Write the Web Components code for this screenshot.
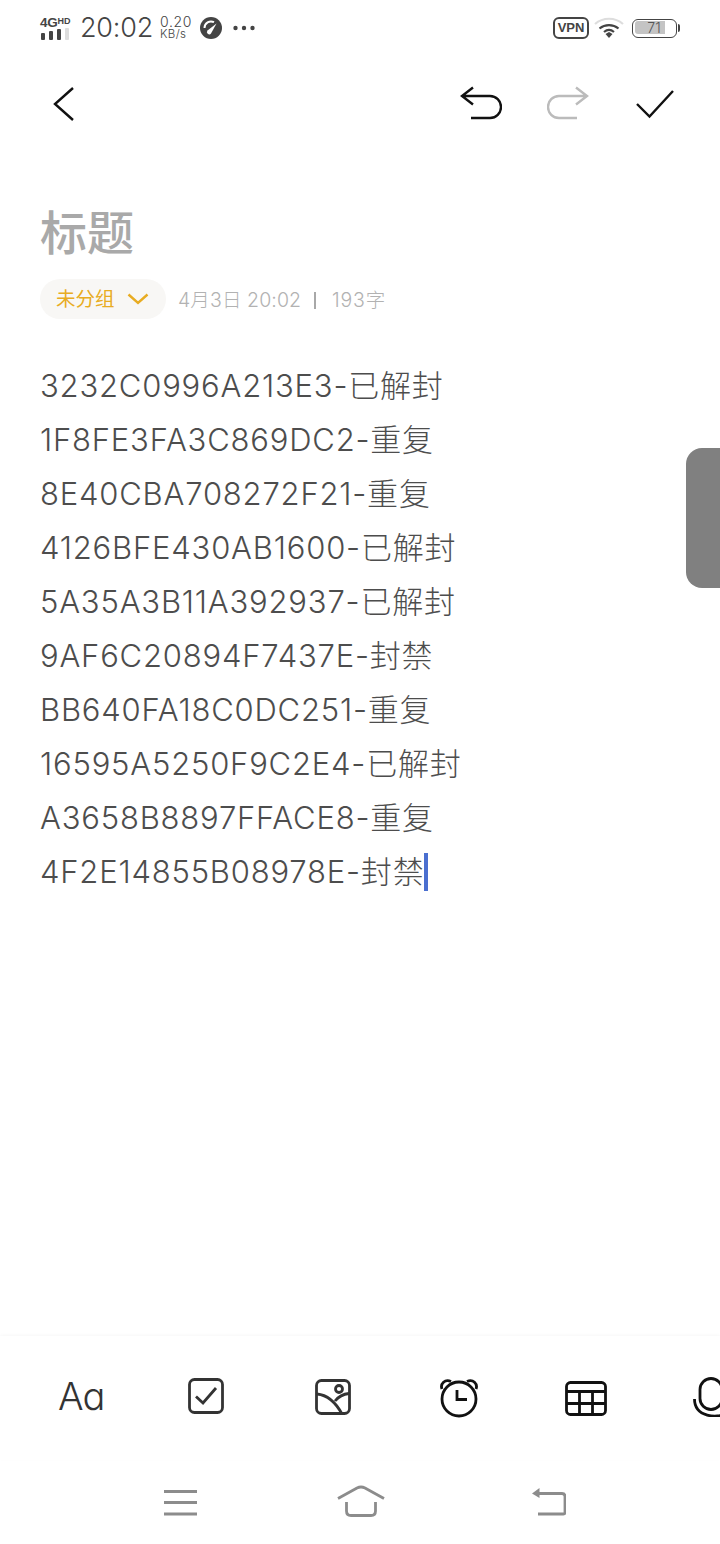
<!DOCTYPE html>
<html lang="zh">
<head>
<meta charset="utf-8">
<title>标题</title>
<style>
html, body { margin: 0; padding: 0; background: #fff; }
body { width: 720px; height: 1544px; overflow: hidden; font-family: Inter, "Noto Sans CJK SC", sans-serif; }
</style>
</head>
<body>
<note-app></note-app>
<script>
const FONT = 'Inter, "Noto Sans CJK SC", sans-serif';

class StatusBar extends HTMLElement {
    constructor() {
        super();
        this.attachShadow({ mode: 'open' });
        this.shadowRoot.innerHTML = `
            <style>
                :host { display: flex; align-items: center; justify-content: space-between; height: 56px; padding: 0 40px; color: #444; font-family: ${FONT}; box-sizing: border-box; }
                .left, .right { display: flex; align-items: center; }
                .net { width: 32px; display: flex; flex-direction: column; margin-top: -1px; }
                .net b { font: bold 13.500px/13px "Liberation Sans", sans-serif; letter-spacing: -0.2px; white-space: nowrap; }
                .net b span { font-size: 9px; vertical-align: 2.500px; letter-spacing: 0; }
                .time { width: 72px; font-size: 27px; line-height: 30px; margin-left: 8px; font-weight: 300; white-space: nowrap; letter-spacing: -.2px; }
                .speed { width: 32px; margin-left: 8px; font-weight: 300; white-space: nowrap; }
                .speed div { font-size: 11.500px; line-height: 13px; letter-spacing: .4px; }
                .speed div:first-child { font-size: 14px; letter-spacing: .6px; }
                svg { display: block; }
                .vpn { box-sizing: border-box; width: 36px; height: 22px; border: 2px solid #444; border-radius: 6px; font: bold 13px/18px "Liberation Sans", sans-serif; text-align: center; }
                .batt { position: relative; box-sizing: border-box; width: 45px; height: 19px; border: 1.500px solid #444; border-radius: 6px; margin-left: 8px; padding: 1.500px; }
                .batt i { display: block; width: 30px; height: 13px; background: #c4c4c4; border-radius: 3px 0 0 3px; }
                .batt span { position: absolute; left: 0; width: 42px; top: -1px; text-align: center; font-size: 14px; line-height: 18px; font-weight: 300; color: #555; }
                .nub { width: 2px; height: 8px; background: #444; border-radius: 0 2px 2px 0; margin-left: 1px; }
            </style>
            <div class="left">
                <div class="net">
                    <b>4G<span>HD</span></b>
                    <svg width="31" height="12" viewBox="0 0 31 12"><g><rect x="1" y="5" width="4" height="7" rx="1" fill="#444"/><rect x="9" y="3" width="4" height="9" rx="1" fill="#444"/><rect x="17" y="1" width="4" height="11" rx="1" fill="#444"/><rect x="25" y="0" width="4" height="12" rx="1" fill="#ddd"/></g></svg>
                </div>
                <div class="time">20:02</div>
                <div class="speed"><div>0.20</div><div>KB/s</div></div>
                <svg style="margin-left:8px" width="22" height="22" viewBox="0 0 22 22"><circle cx="11" cy="11" r="11" fill="#444"/><path d="M4.500 11a6.500 6.500 0 0 1 9.500-5.800" fill="none" stroke="#fff" stroke-width="2"/><path d="M7.500 13.500 16.500 6.500l-5.500 10a2.300 2.300 0 0 1-3.500-3z" fill="#fff"/></svg>
                <svg style="margin-left:11px" width="22" height="6" viewBox="0 0 22 6"><circle cx="2.500" cy="3" r="2.200" fill="#444"/><circle cx="11" cy="3" r="2.200" fill="#444"/><circle cx="19.500" cy="3" r="2.200" fill="#444"/></svg>
            </div>
            <div class="right">
                <div class="vpn">VPN</div>
                <svg style="margin-left:5px" width="30" height="22" viewBox="0 0 30 22" fill="none" stroke-width="2.200"><path d="M1 7c8-7 20-7 28 0" stroke="#ddd"/><path d="M5.500 11.500c5.500-4.500 13.500-4.500 19 0" stroke="#444"/><path d="M10 15c3-2.500 7-2.500 10 0" stroke="#444"/><path d="M11.500 17 15 15 18.500 17 15 21z" fill="#444" stroke="none"/></svg>
                <div class="batt"><i></i><span>71</span></div>
                <div class="nub"></div>
            </div>
        `;
    }
}

class NoteToolbar extends HTMLElement {
    constructor() {
        super();
        this.attachShadow({ mode: 'open' });
        this.shadowRoot.innerHTML = `
            <style>
                :host { display: flex; align-items: center; height: 96px; padding: 0 46px 0 50px; }
                svg { display: block; }
                .end { margin-left: auto; display: flex; align-items: center; gap: 45px; }
            </style>
            <svg width="28" height="40" viewBox="0 0 28 40" fill="none" stroke="#111" stroke-width="2.400"><path d="M23 4 5 20 23 36"/></svg>
            <div class="end">
                <svg width="42" height="36" viewBox="0 0 42 36" fill="none" stroke="#111" stroke-width="2.400"><path d="M13 1.500 2 10l11 8.500M2 10h28a11 11 0 0 1 0 22H11"/></svg>
                <svg width="42" height="36" viewBox="0 0 42 36" fill="none" stroke="#bbb" stroke-width="2.400"><path d="M29 1.500 40 10l-11 8.500M40 10H12a11 11 0 0 0 0 22h18"/></svg>
                <svg style="margin-left:2px" width="38" height="30" viewBox="0 0 38 30" fill="none" stroke="#111" stroke-width="2.400"><path d="M1 15 13.500 27.500 37 2"/></svg>
            </div>
        `;
    }
}

class NoteMeta extends HTMLElement {
    constructor() {
        super();
        this.attachShadow({ mode: 'open' });
        this.shadowRoot.innerHTML = `
            <style>
                :host { display: flex; align-items: center; height: 40px; color: #b2b2b2; font-size: 19.500px; font-weight: 300; font-family: ${FONT}; }
                .group { display: flex; align-items: center; box-sizing: border-box; width: 126px; height: 40px; padding-left: 16px; border-radius: 20px; background: #f8f7f5; color: #e8ac22; font-size: 19.500px; font-weight: 400; }
                .group span { margin-top: -3px; }
                svg { margin-left: 12px; }
                .date { margin: -2px 0 0 12px; white-space: pre; letter-spacing: .1px; }
                .pipe { width: 4px; height: 17px; margin: 2px 0 0 12px; display: flex; justify-content: center; }
                .pipe i { width: 2px; background: #a8a8a8; }
                .count { margin: -2px 0 0 15px; letter-spacing: .8px; }
            </style>
            <div class="group"><span>未分组</span><svg width="22" height="12" viewBox="0 0 22 12" fill="none" stroke="#e8ac22" stroke-width="2.400"><path d="M1.500 1.500 11 10l9.500-8.500"/></svg></div>
            <div class="date"><slot name="date"></slot></div>
            <div class="pipe"><i></i></div>
            <div class="count"><slot name="count"></slot></div>
        `;
    }
}

class NoteLine extends HTMLElement {
    constructor() {
        super();
        this.attachShadow({ mode: 'open' });
        this.shadowRoot.innerHTML = `
            <style>
                :host { display: block; height: 54px; line-height: 54px; white-space: nowrap; letter-spacing: .8px; }
                .caret { display: inline-block; width: 4px; height: 38px; background: #4a6fd0; vertical-align: middle; margin-top: -5px; }
            </style>
            <slot></slot>${this.hasAttribute('caret') ? '<span class="caret"></span>' : ''}
        `;
    }
}

class NoteBody extends HTMLElement {
    constructor() {
        super();
        this.attachShadow({ mode: 'open' });
        this.shadowRoot.innerHTML = `
            <style>
                :host { display: block; flex: 1; padding: 51px 40px 0; color: #4d4d4d; font-size: 31px; font-weight: 300; font-family: ${FONT}; }
                h1 { margin: 0 0 16px; height: 60px; font-size: 47px; line-height: 60px; font-weight: 500; color: #a9a9a9; }
                .lines { margin-top: 40px; }
            </style>
            <h1>标题</h1>
            <slot name="meta"></slot>
            <div class="lines"><slot></slot></div>
        `;
    }
}

class FormatBar extends HTMLElement {
    constructor() {
        super();
        this.attachShadow({ mode: 'open' });
        this.shadowRoot.innerHTML = `
            <style>
                :host { display: flex; align-items: center; height: 124px; padding-left: 58px; overflow: hidden; box-shadow: 0 -1px 3px rgba(0,0,0,.03); font-family: ${FONT}; }
                svg { display: block; flex: none; }
                .aa { width: 47px; font-size: 38px; font-weight: 300; font-feature-settings: "cv11"; color: #333; letter-spacing: -1px; line-height: 44px; margin-top: -4px; white-space: nowrap; }
            </style>
            <div class="aa">Aa</div>
            <svg style="margin-left:84px;margin-top:-4px" width="36" height="36" viewBox="0 0 36 36" fill="none" stroke="#333" stroke-width="2.800"><rect x="1.500" y="1.500" width="33" height="33" rx="5"/><path d="M8 18.500 15 25 28 10"/></svg>
            <svg style="margin-left:91px;margin-top:-2px" width="36" height="36" viewBox="0 0 36 36" fill="none" stroke="#333" stroke-width="2.800"><rect x="1.500" y="1.500" width="33" height="33" rx="5"/><circle cx="24" cy="10" r="3.500"/><path d="M2 15c11 1 19 9 25 20M20 22c4-5 9-7 14-7.500"/></svg>
            <svg style="margin-left:88px" width="40" height="40" viewBox="1 0 40 40" fill="none" stroke="#111" stroke-width="2.800"><circle cx="21" cy="21" r="17"/><path d="M4 11C2 6 7 .5 13 3.500M38 11c2-5-3-10.500-9-7.500M19 12v9.500h10"/></svg>
            <svg style="margin-left:85.500px;margin-top:1px" width="42" height="35" viewBox="0 0 42 35" fill="none" stroke="#111" stroke-width="2.800"><rect x="1.500" y="1.500" width="39" height="32" rx="4"/><path d="M2 10.500h38M2 22.500h38M14.500 11v23M27.500 11v23"/></svg>
            <svg style="margin-left:86px;margin-top:-3px" width="32" height="40" viewBox="0 0 32 40" fill="none" stroke="#111" stroke-width="2.800"><rect x="7" y="1.500" width="22" height="31" rx="11"/><path d="M1.500 22c0 19 24 19 30 15"/></svg>
        `;
    }
}

class NavBar extends HTMLElement {
    constructor() {
        super();
        this.attachShadow({ mode: 'open' });
        this.shadowRoot.innerHTML = `
            <style>
                :host { display: flex; align-items: flex-start; height: 84px; padding: 0 0 0 164px; box-sizing: border-box; }
                svg { display: block; flex: none; }
            </style>
            <svg style="margin-top:30px" width="33" height="26" viewBox="0 0 33 26" fill="none" stroke="#8c8c8c" stroke-width="2.800"><path d="M0 1.500h33M0 12.500h33M0 24h33"/></svg>
            <svg style="margin-left:140px;margin-top:25px" width="48" height="32" viewBox="0 0 48 32" fill="none" stroke="#8c8c8c" stroke-width="2.800"><path d="M1 13.500 20 3c3-1.500 5-1.500 8 0l19 10.500M9.500 17v9c0 3 1.500 4.500 4.500 4.500h20c3 0 4.500-1.500 4.500-4.500v-9"/></svg>
            <svg style="margin-left:147px;margin-top:28px" width="34" height="28" viewBox="0 0 34 28" fill="none" stroke="#8c8c8c" stroke-width="2.800"><path d="M6 5.500h24c2 0 3 1 3 3v16c0 1-.5 1.500-1.500 1.500H6"/><path d="M0 5.500 7.500 0v10z" fill="#8c8c8c" stroke="none"/></svg>
        `;
    }
}

class NoteApp extends HTMLElement {
    constructor() {
        super();
        this.attachShadow({ mode: 'open' });
        this.shadowRoot.innerHTML = `
            <style>
                :host { display: flex; flex-direction: column; position: relative; width: 720px; height: 1544px; background: #fff; }
                .handle { position: absolute; left: 686px; top: 448px; width: 34px; height: 140px; background: #808080; border-radius: 16px 0 0 16px; }
            </style>
            <status-bar></status-bar>
            <note-toolbar></note-toolbar>
            <note-body>
                <note-meta slot="meta"><span slot="date">4月3日 20:02</span><span slot="count">193字</span></note-meta>
                <note-line>3232C0996A213E3-已解封</note-line>
                <note-line>1F8FE3FA3C869DC2-重复</note-line>
                <note-line>8E40CBA708272F21-重复</note-line>
                <note-line>4126BFE430AB1600-已解封</note-line>
                <note-line>5A35A3B11A392937-已解封</note-line>
                <note-line>9AF6C20894F7437E-封禁</note-line>
                <note-line>BB640FA18C0DC251-重复</note-line>
                <note-line>16595A5250F9C2E4-已解封</note-line>
                <note-line>A3658B8897FFACE8-重复</note-line>
                <note-line caret>4F2E14855B08978E-封禁</note-line>
            </note-body>
            <format-bar></format-bar>
            <nav-bar></nav-bar>
            <div class="handle"></div>
        `;
    }
}

customElements.define('status-bar', StatusBar);
customElements.define('note-toolbar', NoteToolbar);
customElements.define('note-meta', NoteMeta);
customElements.define('note-line', NoteLine);
customElements.define('note-body', NoteBody);
customElements.define('format-bar', FormatBar);
customElements.define('nav-bar', NavBar);
customElements.define('note-app', NoteApp);
</script>
</body>
</html>
